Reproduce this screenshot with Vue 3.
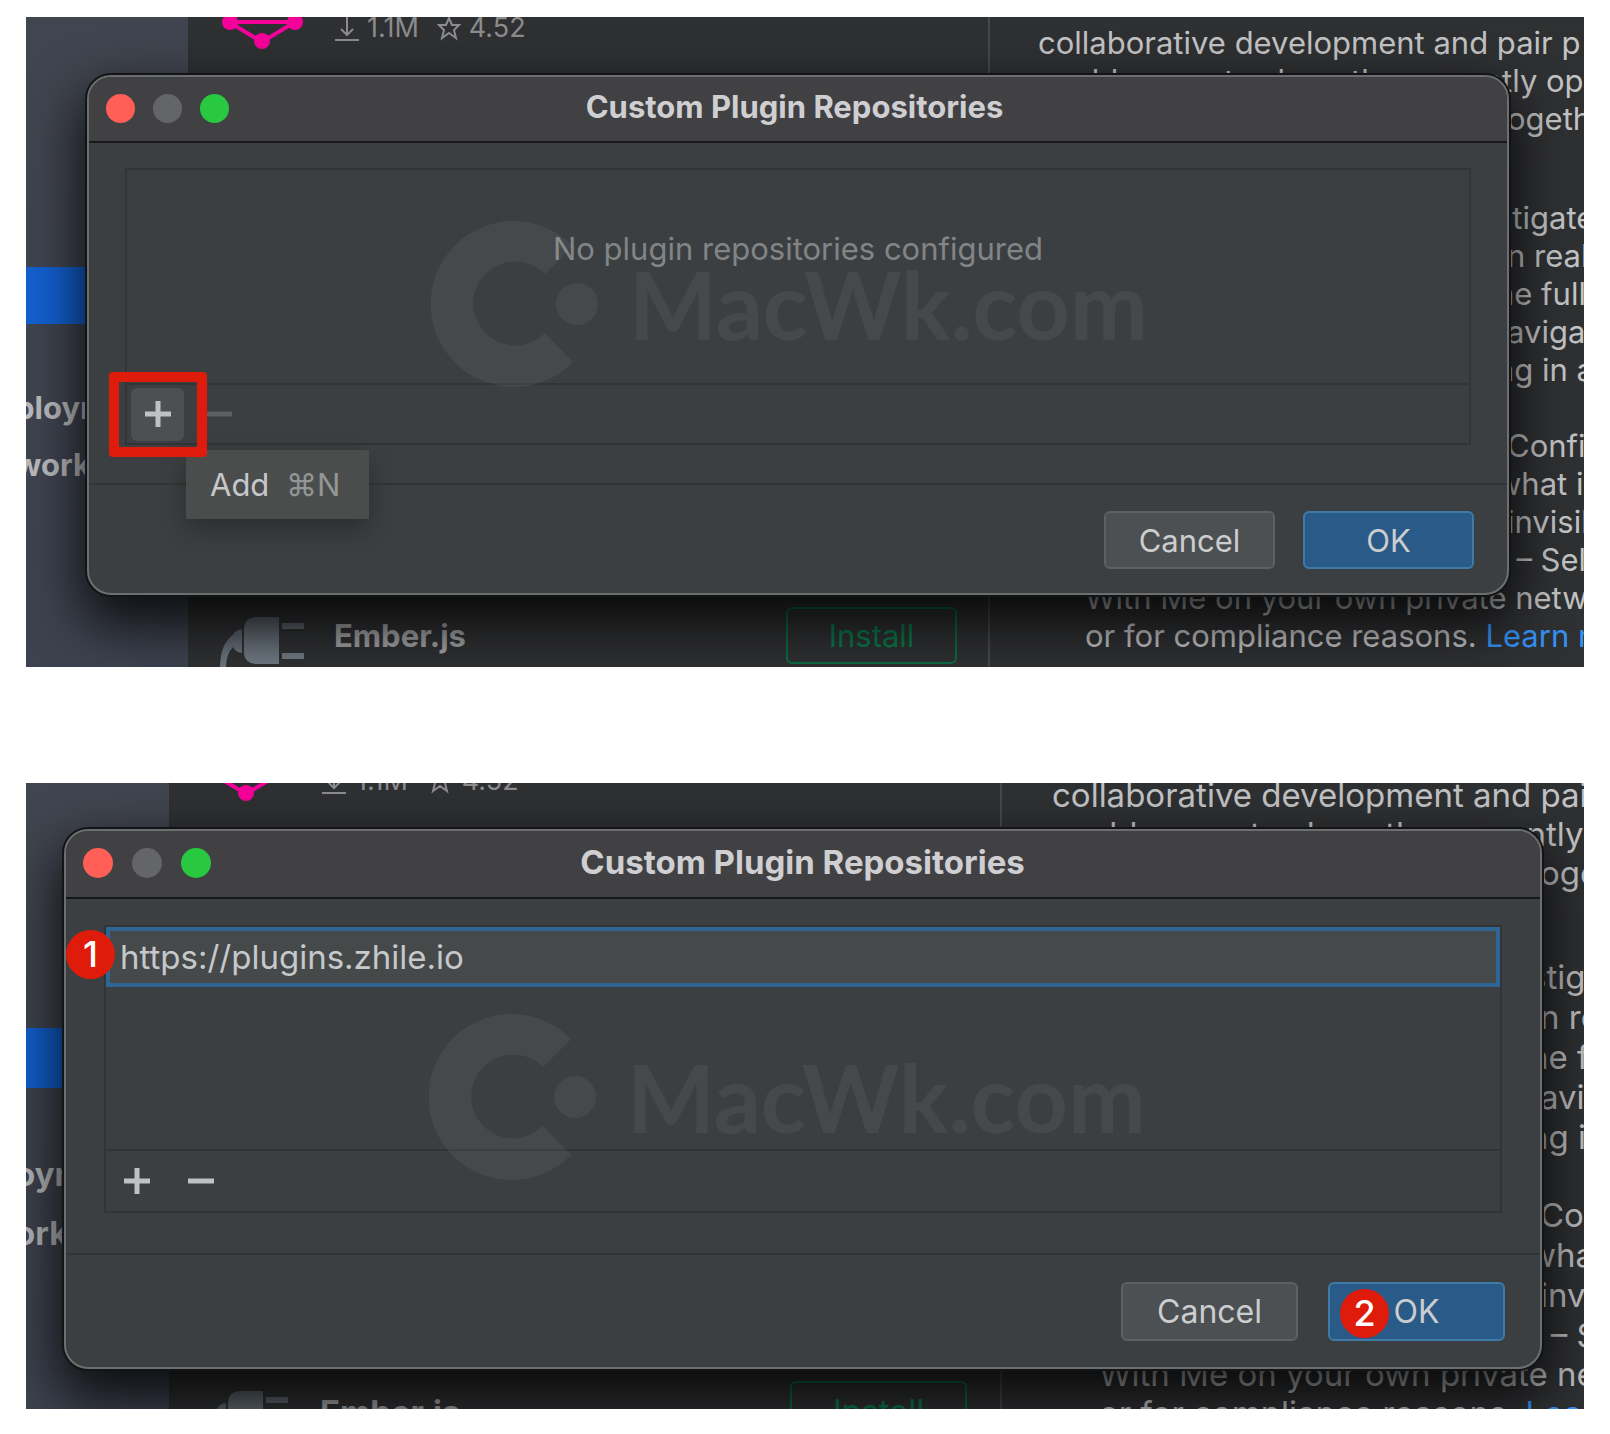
<script setup>
const panels = [
  {
    id: 'empty',
    url: '',
    watermark: 'MacWk.com',
    side: ['ploym', 'work'],
  },
  {
    id: 'filled',
    url: 'https://plugins.zhile.io',
    watermark: 'MacWk.com',
    side: ['oym', 'ork'],
  },
]
const intro = ['collaborative development and pair p', 'enables you to share the currently op']
const tails = [
  { name: 'intro', lines: [{ t: 'ogethe' }] },
  {
    name: 'first',
    lines: [
      { t: 'stigate', cut: true },
      { t: 'n real' },
      { t: 'he full', cut: true },
      { t: 'avigate' },
      { t: 'ng in a', cut: true },
    ],
  },
  {
    name: 'second',
    lines: [
      { t: 'Config' },
      { t: 'what is', cut: true },
      { t: 'invisib' },
      { t: 'r – Sel', cut: true },
    ],
  },
]
</script>

<template>
  <main class="page">
    <section v-for="p in panels" :key="p.id" class="shot" :class="p.id">
      <div class="backdrop">
        <nav class="sidebar">
          <div class="selected"></div>
          <span v-for="s in p.side" :key="s" class="side-item">{{ s }}</span>
        </nav>
        <div class="plugins">
          <div class="plugin top">
            <svg class="graphql" viewBox="0 0 84 36">
              <path d="M9 5H75L42 25Z" fill="none" stroke="#f5009b" stroke-width="4" />
              <circle cx="10" cy="5" r="8" fill="#f5009b" />
              <circle cx="75" cy="5" r="8" fill="#f5009b" />
              <circle cx="42" cy="24" r="8" fill="#f5009b" />
            </svg>
            <div class="stats">
              <svg viewBox="0 0 24 28" fill="none" stroke="#8c8c8e" stroke-width="2">
                <path d="M12 2V20M6 15L12 21L18 15M0 26H24" />
              </svg>
              <span>1.1M</span>
              <svg class="star" viewBox="0 0 24 28" fill="none" stroke="#8c8c8e" stroke-width="2">
                <path d="M12 4L15 11H22L17 16L19 24L12 19L5 24L7 16L2 11H9Z" />
              </svg>
              <span>4.52</span>
            </div>
          </div>
          <div class="plugin ember">
            <svg class="plug" viewBox="0 0 84 52">
              <defs>
                <linearGradient :id="'g-' + p.id" x1="0" y1="0" x2="0" y2="1">
                  <stop offset="0" stop-color="#596068" />
                  <stop offset="1" stop-color="#707a84" />
                </linearGradient>
              </defs>
              <g :fill="`url(#g-${p.id})`">
                <path d="M59 1V48H36Q24 47 24 36V13Q24 2 36 1Z" />
                <path d="M62 7H84V13H62ZM62 37H84V43H62Z" />
                <path d="M22 13V37Q15 36 13 31Q6 38 6 52H0Q0 28 13 19Q15 14 22 13Z" />
              </g>
            </svg>
            <strong>Ember.js</strong>
            <button class="install" type="button">Install</button>
          </div>
        </div>
        <article class="details">
          <p><span v-for="l in intro" :key="l">{{ l }}</span></p>
          <p v-for="g in tails" :key="g.name" class="tail" :class="g.name">
            <span v-for="l in g.lines" :key="l.t" :class="{ cut: l.cut }">{{ l.t }}</span>
          </p>
          <p class="closing">
            <span>With Me on your own private netwo</span>
            <span>or for compliance reasons. <a href="#">Learn m</a></span>
          </p>
        </article>
      </div>

      <div class="dialog" role="dialog" :aria-labelledby="'title-' + p.id">
        <header class="titlebar">
          <i class="light red"></i><i class="light gray"></i><i class="light green"></i>
          <h2 :id="'title-' + p.id">Custom Plugin Repositories</h2>
        </header>
        <div class="body">
          <div class="list">
            <div class="items">
              <input v-if="p.url" class="url" type="text" :value="p.url" aria-label="Repository URL" />
              <p v-else class="none">No plugin repositories configured</p>
            </div>
            <div class="toolbar">
              <button class="tool add" type="button" aria-label="Add">
                <svg viewBox="0 0 26 26"><path d="M13 0V26M0 13H26" /></svg>
              </button>
              <button class="tool remove" type="button" aria-label="Remove">
                <svg viewBox="0 0 26 26"><path d="M0 13H26" /></svg>
              </button>
            </div>
          </div>
        </div>
        <footer class="actions">
          <button class="btn" type="button">Cancel</button>
          <button class="btn primary" type="button">OK</button>
        </footer>
        <div class="watermark">
          <svg viewBox="0 0 168 168">
            <path d="M142 26A83 83 0 1 0 142 142L114 113A42 42 0 1 1 114 54Z" />
            <circle cx="146" cy="84" r="21" />
          </svg>
          <span>{{ p.watermark }}</span>
        </div>
        <template v-if="!p.url">
          <div class="tip" role="tooltip">Add <kbd>⌘N</kbd></div>
          <div class="marker"></div>
        </template>
        <template v-else>
          <span class="badge one">1</span>
          <span class="badge two">2</span>
        </template>
      </div>
    </section>
  </main>
</template>

<style>
body {
  margin: 0;
  background: #fff;
}
</style>

<style scoped>
.page {
  display: flex;
  flex-direction: column;
  gap: 116px;
  padding: 17px 26px 25px;
  font-family: Inter, "Liberation Sans", sans-serif;
}
p,
h2 {
  margin: 0;
}
button,
input {
  box-sizing: border-box;
  margin: 0;
  font: inherit;
}
.shot {
  --fs: 31px;
  --line: 38px;
  display: grid;
  overflow: hidden;
  background: #2f3032;
}
.filled {
  --fs: 33px;
  --line: 39px;
}
.backdrop,
.dialog {
  grid-area: 1 / 1;
  min-width: 0;
}
.backdrop {
  display: flex;
  height: 650px;
  overflow: hidden;
  font-size: var(--fs);
}
.filled .backdrop {
  height: 626px;
}
.sidebar {
  box-sizing: border-box;
  flex: none;
  width: 162px;
  padding-top: 250px;
  background: linear-gradient(160deg, #41454f, #3d424e);
  color: #b9babd;
  font-weight: 700;
  overflow: hidden;
}
.filled .sidebar {
  width: 143px;
  padding-top: 245px;
}
.selected {
  height: 57px;
  margin-bottom: 55px;
  background: #1260d0;
}
.filled .selected {
  height: 60px;
  margin-bottom: 57px;
}
.side-item {
  display: block;
  margin-left: -11px;
  line-height: 57px;
}
.filled .side-item {
  line-height: 59px;
}
.plugins {
  box-sizing: border-box;
  display: flex;
  flex-direction: column;
  justify-content: space-between;
  flex: none;
  width: 802px;
  padding: 0 31px 0 32px;
  border-right: 2px solid #47484a;
}
.filled .plugins {
  width: 833px;
  padding: 0 33px 0 35px;
}
.plugin {
  display: flex;
  align-items: flex-start;
}
.graphql {
  width: 84px;
  height: 36px;
}
.filled .graphql {
  margin-top: -14px;
}
.stats {
  display: flex;
  align-items: center;
  gap: 8px;
  margin: -5px 0 0 31px;
  color: #8c8c8e;
  font-size: 27px;
  line-height: 32px;
}
.filled .stats {
  gap: 10px;
  margin: -18px 0 0 34px;
}
.stats svg {
  width: 24px;
  height: 28px;
}
.stats .star {
  margin-left: 10px;
}
.ember {
  height: 60px;
  color: #a0a1a3;
}
.filled .ember {
  height: 28px;
}
.ember strong {
  flex: 1;
  line-height: 58px;
}
.filled .ember strong {
  line-height: 62px;
}
.plug {
  flex: none;
  width: 84px;
  height: 52px;
  margin: 9px 30px 0 0;
}
.filled .plug {
  margin-right: 32px;
}
.install {
  flex: none;
  width: 171px;
  height: 57px;
  border: 2px solid #0a6e44;
  border-radius: 6px;
  background: transparent;
  color: #0a7a4b;
}
.filled .install {
  width: 177px;
  height: 60px;
}
.details {
  box-sizing: border-box;
  flex: 1;
  min-width: 0;
  padding: 7px 0 0 48px;
  color: #c2c3c5;
  line-height: var(--line);
  white-space: nowrap;
  overflow: hidden;
}
.filled .details {
  padding: 0 0 0 50px;
}
.filled .details p:first-child {
  margin-top: -7px;
}
.details span {
  display: block;
}
.tail {
  padding-left: 469px;
}
.filled .tail {
  padding-left: 488px;
}
.tail .cut {
  margin-left: -11px;
}
.first {
  margin-top: 61px;
}
.second {
  margin-top: 38px;
}
.filled .first {
  margin-top: 64px;
  line-height: 40px;
}
.filled .second {
  line-height: 40px;
}
.closing {
  padding-left: 47px;
}
.details a {
  color: #3592f5;
  text-decoration: none;
}
.dialog {
  position: relative;
  z-index: 1;
  box-sizing: border-box;
  display: flex;
  flex-direction: column;
  align-self: start;
  margin: 58px 75px 0 61px;
  border: 2px solid #6c6e70;
  border-radius: 24px;
  background: #3c3f41;
  box-shadow: 0 0 0 2px #131415, 0 24px 54px 6px rgba(0, 0, 0, 0.8);
  color: #c6c8ca;
  font-size: var(--fs);
}
.filled .dialog {
  margin: 46px 42px 0 38px;
}
.titlebar {
  box-sizing: border-box;
  display: flex;
  align-items: center;
  gap: 18px;
  height: 66px;
  padding: 0 17px 2px;
  border-bottom: 2px solid #17181a;
  border-radius: 22px 22px 0 0;
  background: #414144;
}
.filled .titlebar {
  gap: 19px;
  height: 68px;
}
.light {
  width: 29px;
  height: 29px;
  border-radius: 50%;
}
.filled .light {
  width: 30px;
  height: 30px;
}
.red {
  background: #ff5f57;
}
.gray {
  background: #646569;
}
.green {
  background: #28c840;
}
.titlebar h2 {
  flex: 1;
  padding: 0 148px 3px 0;
  color: #cfcfd2;
  font-size: var(--fs);
  text-align: center;
}
.body {
  padding: 25px 36px 38px;
  border-bottom: 2px solid #323536;
}
.filled .body {
  padding: 26px 38px 40px;
}
.list {
  border: 2px solid #323536;
}
.items {
  height: 213px;
  border-bottom: 2px solid #323536;
}
.filled .items {
  height: 222px;
}
.none {
  padding-top: 60px;
  color: #828486;
  line-height: 38px;
  text-align: center;
}
.url {
  display: block;
  width: 100%;
  height: 60px;
  padding: 0 10px;
  border: 4px solid #2f6594;
  background: #45494a;
  color: #c6c8ca;
  outline: none;
}
.toolbar {
  display: flex;
  align-items: center;
  gap: 11px;
  height: 58px;
  padding: 0 4px;
}
.filled .toolbar {
  height: 60px;
}
.tool {
  display: grid;
  place-items: center;
  width: 53px;
  height: 53px;
  padding: 0;
  border: 0;
  border-radius: 6px;
  background: none;
}
.empty .add {
  background: #4c5052;
}
.tool svg {
  width: 26px;
  height: 26px;
  fill: none;
  stroke: #bfc1c4;
  stroke-width: 5;
}
.empty .toolbar {
  gap: 8px;
}
.empty .remove svg {
  stroke: #5d6062;
}
.actions {
  display: flex;
  justify-content: flex-end;
  gap: 28px;
  padding: 26px 33px 24px;
}
.filled .actions {
  gap: 30px;
  padding: 27px 35px 26px;
}
.btn {
  width: 171px;
  height: 58px;
  padding: 0;
  border: 2px solid #5e6163;
  border-radius: 6px;
  background: #4c5052;
  color: #cbcdcf;
}
.filled .btn {
  width: 177px;
  height: 59px;
  font-size: 32px;
}
.btn.primary {
  border-color: #3e7ba8;
  background: #2a5a87;
}
.watermark {
  position: absolute;
  top: 143px;
  left: 342px;
  display: flex;
  align-items: center;
  color: rgba(255, 255, 255, 0.055);
  font-family: Lato, sans-serif;
  font-size: 93px;
  font-weight: 700;
  line-height: 168px;
  pointer-events: none;
}
.watermark svg {
  width: 168px;
  height: 168px;
  margin-right: 30px;
  fill: rgba(255, 255, 255, 0.055);
}
.filled .watermark {
  top: 182px;
  left: 363px;
}
.tip {
  position: absolute;
  top: 373px;
  left: 97px;
  padding: 0 29px 0 24px;
  background: #4b4d4d;
  box-shadow: 0 10px 26px rgba(0, 0, 0, 0.3);
  line-height: 69px;
}
.tip kbd {
  margin-left: 8px;
  color: #939596;
  font: inherit;
}
.marker {
  position: absolute;
  top: 295px;
  left: 20px;
  box-sizing: border-box;
  width: 98px;
  height: 85px;
  border: 10px solid #df1b0b;
  border-radius: 4px;
}
.badge {
  position: absolute;
  width: 49px;
  height: 49px;
  border-radius: 50%;
  background: #df1b0b;
  color: #fff;
  font-size: 36px;
  font-weight: 500;
  line-height: 49px;
  text-align: center;
}
.badge.one {
  top: 99px;
  left: 0;
}
.badge.two {
  right: 151px;
  bottom: 29px;
}
</style>
